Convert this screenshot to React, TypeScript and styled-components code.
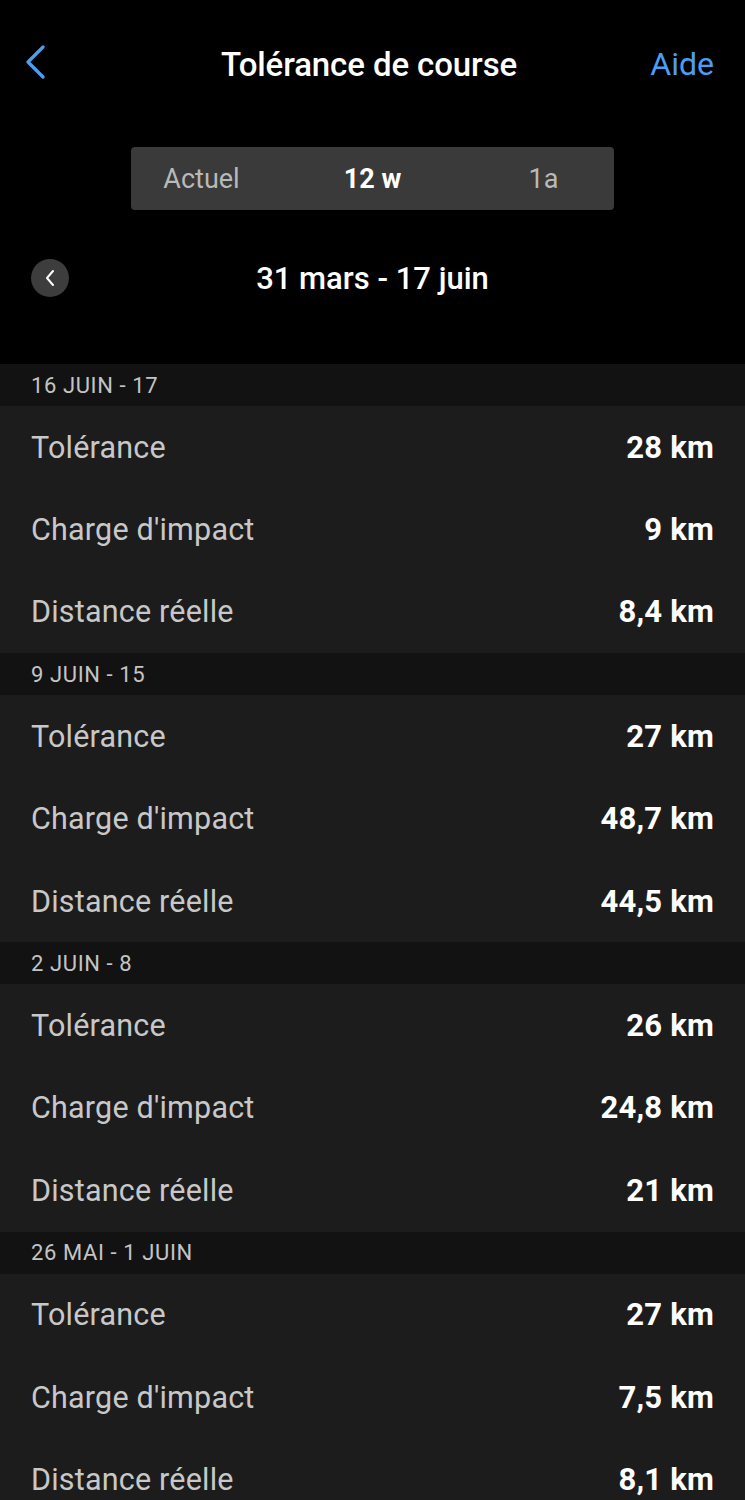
import React from 'react';
import styled, { createGlobalStyle } from 'styled-components';

const GlobalStyle = createGlobalStyle`
  html, body {
    margin: 0;
    padding: 0;
    background: #000;
  }
  body {
    font-family: Roboto, "Liberation Sans", Arial, sans-serif;
    -webkit-font-smoothing: antialiased;
  }
`;

const Page = styled.div`
  width: 745px;
  min-height: 1500px;
  background: #1c1c1c;
  overflow: hidden;
`;

const Top = styled.div`
  background: #000;
  height: 364px;
  display: flex;
  flex-direction: column;
`;

const NavBar = styled.div`
  height: 128px;
  display: grid;
  grid-template-columns: 110px 1fr 110px;
  align-items: center;
  padding: 0 31px 0 24px;
  box-sizing: border-box;
`;

const BackButton = styled.button`
  background: none;
  border: none;
  padding: 0;
  width: 26px;
  height: 36px;
  display: flex;
  align-items: center;
  cursor: pointer;
  margin-top: -4px;
`;

const Title = styled.h1`
  margin: 0;
  text-align: center;
  color: #fff;
  font-size: 33px;
  font-weight: 500;
  letter-spacing: -0.1px;
`;

const HelpLink = styled.a`
  justify-self: end;
  color: #4a9ff3;
  font-size: 32px;
  font-weight: 400;
  text-decoration: none;
`;

const Segmented = styled.div`
  align-self: center;
  margin-top: 19px;
  width: 483px;
  height: 63px;
  background: #3a3a3a;
  border-radius: 4px;
  display: grid;
  grid-template-columns: repeat(3, 120px);
  column-gap: 51px;
  justify-content: center;
  align-items: center;
`;

const Segment = styled.div<{ $active?: boolean }>`
  text-align: center;
  font-size: 27px;
  color: ${p => (p.$active ? '#fff' : '#b9b9b9')};
  font-weight: ${p => (p.$active ? 700 : 400)};
`;

const DateNav = styled.div`
  margin-top: 49px;
  height: 38px;
  display: grid;
  grid-template-columns: 38px 1fr 38px;
  align-items: center;
  padding: 0 31px;
`;

const CircleButton = styled.button`
  width: 38px;
  height: 38px;
  border-radius: 50%;
  background: #3d3d3d;
  border: none;
  padding: 0;
  display: flex;
  align-items: center;
  justify-content: center;
`;

const DateRange = styled.div`
  text-align: center;
  color: #fff;
  font-size: 31px;
  font-weight: 500;
`;

const SectionHeader = styled.div`
  height: 42px;
  background: #121212;
  color: #c4c4c4;
  font-size: 22px;
  letter-spacing: 0.6px;
  display: flex;
  align-items: center;
  padding: 0 31px;
`;

const Row = styled.div`
  height: 82.4px;
  display: flex;
  align-items: center;
  justify-content: space-between;
  padding: 0 31px;
  background: #1c1c1c;
`;

const Label = styled.span`
  color: #c8c8c8;
  font-size: 30.5px;
  letter-spacing: 0.2px;
`;

const Value = styled.span`
  color: #fff;
  font-size: 31px;
  font-weight: 700;
  letter-spacing: 0.2px;
`;

type Week = {
  title: string;
  tolerance: string;
  impact: string;
  distance: string;
};

const weeks: Week[] = [
  { title: '16 JUIN - 17', tolerance: '28 km', impact: '9 km', distance: '8,4 km' },
  { title: '9 JUIN - 15', tolerance: '27 km', impact: '48,7 km', distance: '44,5 km' },
  { title: '2 JUIN - 8', tolerance: '26 km', impact: '24,8 km', distance: '21 km' },
  { title: '26 MAI - 1 JUIN', tolerance: '27 km', impact: '7,5 km', distance: '8,1 km' },
];

export default function App() {
  return (
    <React.Fragment>
      <GlobalStyle />
      <Page>
        <Top>
          <NavBar>
            <BackButton aria-label="Retour">
              <svg width="22" height="34" viewBox="0 0 22 34">
                <path d="M19 2 L4 17 L19 32" fill="none" stroke="#4a9ff3" strokeWidth="3.2" strokeLinecap="round" strokeLinejoin="round" />
              </svg>
            </BackButton>
            <Title>Tolérance de course</Title>
            <HelpLink>Aide</HelpLink>
          </NavBar>
          <Segmented>
            <Segment>Actuel</Segment>
            <Segment $active>12 w</Segment>
            <Segment>1a</Segment>
          </Segmented>
          <DateNav>
            <CircleButton aria-label="Précédent">
              <svg width="12" height="18" viewBox="0 0 12 18">
                <path d="M9 2 L3 9 L9 16" fill="none" stroke="#fff" strokeWidth="2" strokeLinecap="round" strokeLinejoin="round" />
              </svg>
            </CircleButton>
            <DateRange>31 mars - 17 juin</DateRange>
            <span />
          </DateNav>
        </Top>
        {weeks.map(w => (
          <section key={w.title}>
            <SectionHeader>{w.title}</SectionHeader>
            <Row>
              <Label>Tolérance</Label>
              <Value>{w.tolerance}</Value>
            </Row>
            <Row>
              <Label>Charge d'impact</Label>
              <Value>{w.impact}</Value>
            </Row>
            <Row>
              <Label>Distance réelle</Label>
              <Value>{w.distance}</Value>
            </Row>
          </section>
        ))}
      </Page>
    </React.Fragment>
  );
}
